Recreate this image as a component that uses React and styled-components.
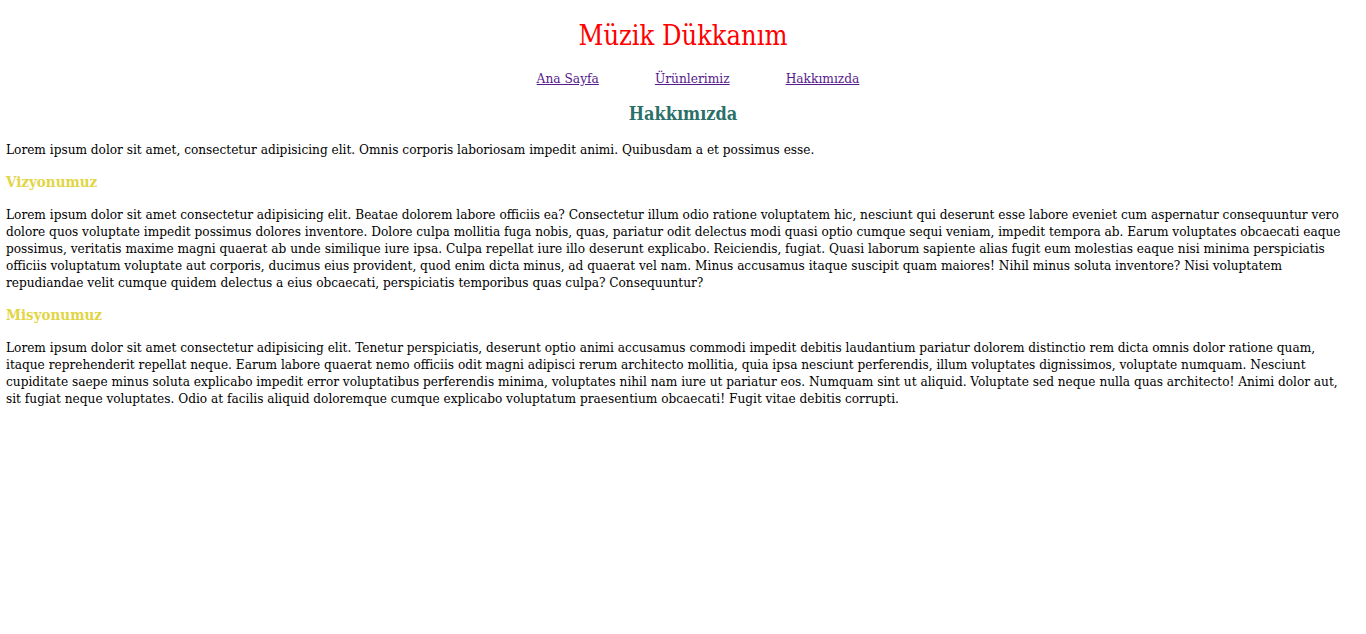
import React from "react";
import styled, { createGlobalStyle } from "styled-components";

const GlobalStyle = createGlobalStyle`
  body {
    margin: 0;
    padding: 0 6px;
    background: #fff;
    font-family: "DejaVu Serif Condensed", "DejaVu Serif", serif;
    color: #000;
  }
`;

const Header = styled.header`
  display: flex;
  flex-direction: column;
  align-items: center;
`;

const Title = styled.h1`
  margin: 20px 0 0;
  font-size: 27px;
  line-height: 32px;
  font-weight: 400;
  color: #ff0000;
`;

const Nav = styled.ul`
  display: flex;
  gap: 56px;
  list-style: none;
  margin: 17px 0 0;
  padding: 0 0 0 30px;
  font-size: 13.6px;
  line-height: 18px;
`;

const NavLink = styled.a`
  color: #551a8b;
  text-decoration: underline;
`;

const SectionTitle = styled.h2`
  margin: 15px 0 0;
  font-size: 18px;
  line-height: 24px;
  font-weight: 700;
  color: #2a7068;
  text-align: center;
`;

const Text = styled.p`
  margin: ${(p) => p.$top || 10}px 0 0;
  padding-right: 8px;
  font-size: 13.5px;
  line-height: 17px;
`;

const SubTitle = styled.h3`
  margin: 14px 0 0;
  font-size: 15px;
  line-height: 20px;
  font-weight: 700;
  color: #e2d545;
`;

export default function App() {
  return (
    <>
      <GlobalStyle />
      <Header>
        <Title>Müzik Dükkanım</Title>
        <Nav>
          <li>
            <NavLink href="#">Ana Sayfa</NavLink>
          </li>
          <li>
            <NavLink href="#">Ürünlerimiz</NavLink>
          </li>
          <li>
            <NavLink href="#">Hakkımızda</NavLink>
          </li>
        </Nav>
      </Header>
      <main>
        <SectionTitle>Hakkımızda</SectionTitle>
        <Text $top={15}>
          Lorem ipsum dolor sit amet, consectetur adipisicing elit. Omnis corporis laboriosam impedit animi. Quibusdam a et possimus esse.
        </Text>
        <SubTitle>Vizyonumuz</SubTitle>
        <Text $top={14}>
          Lorem ipsum dolor sit amet consectetur adipisicing elit. Beatae dolorem labore officiis ea? Consectetur illum odio ratione voluptatem hic, nesciunt qui deserunt esse labore eveniet cum aspernatur consequuntur vero dolore quos voluptate impedit possimus dolores inventore. Dolore culpa mollitia fuga nobis, quas, pariatur odit delectus modi quasi optio cumque sequi veniam, impedit tempora ab. Earum voluptates obcaecati eaque possimus, veritatis maxime magni quaerat ab unde similique iure ipsa. Culpa repellat iure illo deserunt explicabo. Reiciendis, fugiat. Quasi laborum sapiente alias fugit eum molestias eaque nisi minima perspiciatis officiis voluptatum voluptate aut corporis, ducimus eius provident, quod enim dicta minus, ad quaerat vel nam. Minus accusamus itaque suscipit quam maiores! Nihil minus soluta inventore? Nisi voluptatem repudiandae velit cumque quidem delectus a eius obcaecati, perspiciatis temporibus quas culpa? Consequuntur?
        </Text>
        <SubTitle>Misyonumuz</SubTitle>
        <Text $top={14}>
          Lorem ipsum dolor sit amet consectetur adipisicing elit. Tenetur perspiciatis, deserunt optio animi accusamus commodi impedit debitis laudantium pariatur dolorem distinctio rem dicta omnis dolor ratione quam, itaque reprehenderit repellat neque. Earum labore quaerat nemo officiis odit magni adipisci rerum architecto mollitia, quia ipsa nesciunt perferendis, illum voluptates dignissimos, voluptate numquam. Nesciunt cupiditate saepe minus soluta explicabo impedit error voluptatibus perferendis minima, voluptates nihil nam iure ut pariatur eos. Numquam sint ut aliquid. Voluptate sed neque nulla quas architecto! Animi dolor aut, sit fugiat neque voluptates. Odio at facilis aliquid doloremque cumque explicabo voluptatum praesentium obcaecati! Fugit vitae debitis corrupti.
        </Text>
      </main>
    </>
  );
}
